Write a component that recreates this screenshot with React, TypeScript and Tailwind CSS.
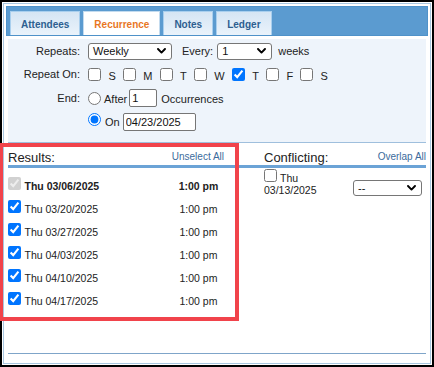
import React from "react";

const Chevron = () => (
  <svg width="9" height="6" viewBox="0 0 9 6" className="shrink-0">
    <path d="M1 1 L4.5 4.6 L8 1" fill="none" stroke="#000" strokeWidth="1.9" strokeLinecap="round" strokeLinejoin="round" />
  </svg>
);

type SelProps = { text: string; cls: string };
const FakeSelect = ({ text, cls }: SelProps) => (
  <div className={`flex items-center justify-between rounded-[3px] border border-[#767676] bg-white pl-[4px] pr-[5px] text-[#111] ${cls}`}>
    <span>{text}</span>
    <Chevron />
  </div>
);

const Tab = ({ label, active }: { label: string; active?: boolean }) => (
  <div
    className={
      active
        ? "flex h-[24px] items-center border border-b-0 border-[#c3dbef] bg-white px-[10px] pt-[2px] text-[10px] font-bold text-[#e8771f]"
        : "flex h-[24px] items-center border border-b-0 border-[#a9cfee] bg-linear-to-b from-[#d5e5f4] to-[#eaf3fb] px-[10px] pt-[2px] text-[10px] font-bold text-[#2d5f90]"
    }
  >
    {label}
  </div>
);

const days: { l: string; c?: boolean }[] = [
  { l: "S" },
  { l: "M" },
  { l: "T" },
  { l: "W" },
  { l: "T", c: true },
  { l: "F" },
  { l: "S" },
];

const results = [
  { d: "Thu 03/06/2025", t: "1:00 pm", first: true },
  { d: "Thu 03/20/2025", t: "1:00 pm" },
  { d: "Thu 03/27/2025", t: "1:00 pm" },
  { d: "Thu 04/03/2025", t: "1:00 pm" },
  { d: "Thu 04/10/2025", t: "1:00 pm" },
  { d: "Thu 04/17/2025", t: "1:00 pm" },
];

export default function App() {
  return (
    <div className="relative h-[367px] w-[434px] font-['Liberation_Sans',Arial,sans-serif] text-[#222]">
      <div className="h-full w-full border-2 border-black bg-white p-px">
        <div className="flex h-full flex-col border border-[#a9c7e0] p-[2px] pb-[9px]">
          {/* Tab bar */}
          <div className="flex h-[30px] shrink-0 items-end gap-[3px] border border-[#4f92c9] bg-[#5b9bd0] pl-[3px]">
            <Tab label="Attendees" />
            <Tab label="Recurrence" active />
            <Tab label="Notes" />
            <Tab label="Ledger" />
          </div>

          {/* Recurrence form panel */}
          <div className="mx-[2px] mt-[3px] h-[104px] shrink-0 border-b border-[#9fbfdd] bg-[#eef4fb] pt-[3px] text-[11px]">
            <div className="grid grid-cols-[72px_1fr] gap-x-[8px] gap-y-[5.5px]">
              <div className="flex h-[18px] items-center justify-end">Repeats:</div>
              <div className="flex h-[18px] items-center">
                <FakeSelect text="Weekly" cls="h-[17px] w-[84px]" />
                <span className="ml-[10px]">Every:</span>
                <FakeSelect text="1" cls="ml-[4px] h-[17px] w-[55px]" />
                <span className="ml-[6px]">weeks</span>
              </div>

              <div className="flex h-[18px] items-center justify-end">Repeat On:</div>
              <div className="flex h-[18px] items-center">
                {days.map((d, i) => (
                  <React.Fragment key={i}>
                    <input
                      type="checkbox"
                      defaultChecked={d.c}
                      className={i === 0 ? "size-[13px]" : "ml-[7px] size-[13px]"}
                    />
                    <span className="ml-[7.5px] pt-[3px]">{d.l}</span>
                  </React.Fragment>
                ))}
              </div>

              <div className="flex h-[18px] items-center justify-end">End:</div>
              <div className="flex h-[18px] items-center">
                <input type="radio" name="end" className="size-[13px]" />
                <span className="ml-[3px] pt-[2px]">After</span>
                <input
                  type="text"
                  defaultValue="1"
                  className="ml-[2px] h-[18px] w-[28px] rounded-[2px] border border-[#767676] bg-white px-[2px] text-[11px] text-[#111] outline-none"
                />
                <span className="ml-[4px] pt-[2px]">Occurrences</span>
              </div>

              <div />
              <div className="flex h-[18px] items-center">
                <input type="radio" name="end" defaultChecked className="mb-[4px] size-[13px]" />
                <span className="ml-[4px] pt-[2px]">On</span>
                <input
                  type="text"
                  defaultValue="04/23/2025"
                  className="ml-[3px] h-[18px] w-[73px] rounded-[2px] border border-[#767676] bg-white px-[2px] text-[11px] text-[#111] outline-none"
                />
              </div>
            </div>
          </div>

          {/* Results / Conflicting */}
          <div className="mx-[2px] grid flex-1 grid-cols-[216px_1fr] pt-[7px]">
            <div>
              <div className="flex h-[18px] items-start justify-between border-b-[3px] border-[#6ba3d6]">
                <span className="text-[13px] leading-[15px]">Results:</span>
                <span className="mt-px text-[10px] leading-[12px] text-[#3b6b9c]">Unselect All</span>
              </div>
              <div className="pt-[9px]">
                {results.map((r, i) => (
                  <div key={i} className="flex h-[23px] items-start">
                    <input
                      type="checkbox"
                      defaultChecked
                      disabled={r.first}
                      className="size-[13px] shrink-0"
                    />
                    <span
                      className={`ml-[3.5px] mt-[3px] w-[149px] text-[10.5px] leading-[13px] ${r.first ? "font-bold" : ""}`}
                    >
                      {r.d}
                    </span>
                    <span
                      className={`mt-[3px] w-[50px] text-center text-[10.5px] leading-[13px] ${r.first ? "font-bold" : ""}`}
                    >
                      {r.t}
                    </span>
                  </div>
                ))}
              </div>
            </div>

            <div>
              <div className="flex h-[18px] items-start justify-between border-b-[3px] border-[#6ba3d6] pl-[40px]">
                <span className="text-[13px] leading-[15px]">Conflicting:</span>
                <span className="mt-px text-[10px] leading-[12px] text-[#3b6b9c]">Overlap All</span>
              </div>
              <div className="flex items-start pl-[40px] pt-px text-[10.5px]">
                <div className="w-[89px]">
                  <div className="flex items-start">
                    <input type="checkbox" className="size-[13px] shrink-0" />
                    <span className="ml-[3px] mt-[3.4px] leading-[12px]">Thu</span>
                  </div>
                  <div className="leading-[12px]">03/13/2025</div>
                </div>
                <FakeSelect text="--" cls="mt-[11px] h-[16px] w-[69px] text-[11px]" />
              </div>
            </div>
          </div>

          <div className="mx-[2px] h-px shrink-0 bg-[#7fa5c9]" />
        </div>
      </div>

      {/* red highlight annotation */}
      <div className="pointer-events-none absolute left-[-1px] top-[143px] h-[178px] w-[240px] border-4 border-[#f1434b]" />
    </div>
  );
}
